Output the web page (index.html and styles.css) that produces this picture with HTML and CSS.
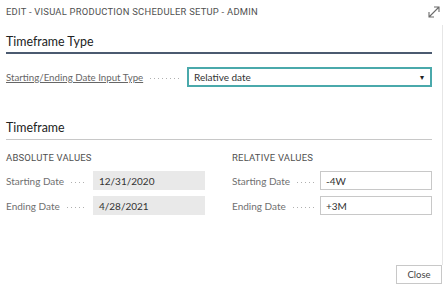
FILE: index.html
```html
<!DOCTYPE html>
<html lang="en">
<head>
    <meta charset="UTF-8">
    <meta name="viewport" content="width=device-width, initial-scale=1.0">
    <title>Visual Production Scheduler Setup</title>
    <link rel="stylesheet" href="styles.css">
</head>
<body>
    <div class="dialog">
        <div class="header">
            <span class="title">EDIT - VISUAL PRODUCTION SCHEDULER SETUP - ADMIN</span>
            <svg class="expand" width="14" height="14" viewBox="0 0 14 14">
                <path d="M2 12 L12 2 M7 2 H12 V7 M2 7 V12 H7" fill="none" stroke="#6b6b6b" stroke-width="1.1"/>
            </svg>
        </div>

        <div class="content">
            <div class="section">
                <h2 class="section-title strong">Timeframe Type</h2>
                <div class="field wide">
                    <a class="label link">Starting/Ending Date Input Type</a>
                    <span class="dots"></span>
                    <div class="select">
                        <span>Relative date</span>
                        <span class="arrow">&#9662;</span>
                    </div>
                </div>
            </div>

            <div class="section">
                <h2 class="section-title">Timeframe</h2>
                <div class="columns">
                    <div class="group">
                        <div class="group-title">ABSOLUTE VALUES</div>
                        <div class="field">
                            <span class="label">Starting Date</span>
                            <span class="dots"></span>
                            <div class="input readonly">12/31/2020</div>
                        </div>
                        <div class="field">
                            <span class="label">Ending Date</span>
                            <span class="dots"></span>
                            <div class="input readonly">4/28/2021</div>
                        </div>
                    </div>
                    <div class="group">
                        <div class="group-title">RELATIVE VALUES</div>
                        <div class="field">
                            <span class="label">Starting Date</span>
                            <span class="dots"></span>
                            <div class="input">-4W</div>
                        </div>
                        <div class="field">
                            <span class="label">Ending Date</span>
                            <span class="dots"></span>
                            <div class="input">+3M</div>
                        </div>
                    </div>
                </div>
            </div>
        </div>

        <div class="footer">
            <button class="btn">Close</button>
        </div>
    </div>
</body>
</html>
```

FILE: styles.css
```css
body {
    margin: 0;
    font-family: "Lato", "Open Sans", sans-serif;
    color: #333;
    background-color: #fff;
}
.dialog {
    width: 445px;
    height: 287px;
    display: flex;
    flex-direction: column;
}
.header {
    display: flex;
    justify-content: space-between;
    align-items: flex-start;
    padding: 5px 4px 0 6px;
    height: 20px;
}
.title {
    font-family: "Roboto", sans-serif;
    font-size: 9.4px;
    letter-spacing: 0.25px;
    color: #505050;
    padding-top: 1px;
}
.content {
    flex: 1;
    padding: 0 10px 0 6px;
    border-right: 1px solid #e6e6e6;
    margin-right: 2px;
}
.section-title {
    margin: 9px 0 0 0;
    font-size: 12.4px;
    font-weight: 400;
    color: #222;
    padding-bottom: 4px;
    border-bottom: 1px solid #c8c8c8;
}
.section-title.strong {
    padding-bottom: 3px;
    border-bottom: 2px solid #4b5a70;
}
.section + .section .section-title {
    margin-top: 34px;
}
.field {
    display: flex;
    align-items: center;
    height: 19px;
    margin-top: 6px;
    font-size: 10px;
}
.field.wide {
    margin-top: 13px;
}
.label {
    color: #707070;
    white-space: nowrap;
}
.link {
    font-size: 9.7px;
    text-decoration: underline;
    color: #666;
}
.dots {
    flex: 1;
    height: 1px;
    background-image: linear-gradient(to right, #b0b0b0 1px, transparent 1px);
    background-size: 4px 1px;
    background-repeat: repeat-x;
    margin: 3px 6px 0 7px;
}
.select {
    flex: 0 0 245px;
    height: 20px;
    box-sizing: border-box;
    border: 2px solid #4aa9ab;
    display: flex;
    align-items: center;
    justify-content: space-between;
    padding: 0 6px 0 5px;
    color: #333;
}
.arrow {
    font-size: 8px;
    color: #222;
}
.columns {
    display: grid;
    grid-template-columns: 199px 200px;
    column-gap: 27px;
}
.group-title {
    margin-top: 12px;
    font-family: "Roboto", sans-serif;
    font-size: 9.5px;
    color: #505050;
    letter-spacing: 0.2px;
    margin-bottom: 8px;
}
.input {
    width: 112px;
    height: 19px;
    box-sizing: border-box;
    border: 1px solid #c8c8c8;
    padding: 0 5px;
    display: flex;
    align-items: center;
    color: #333;
}
.input.readonly {
    background-color: #e9e9e9;
    border-color: #e9e9e9;
}
.footer {
    display: flex;
    justify-content: flex-end;
    padding: 0 3px 3px 0;
}
.btn {
    width: 46px;
    height: 19px;
    font-family: "Lato", sans-serif;
    font-size: 9.5px;
    color: #444;
    background-color: #fff;
    border: 1px solid #c8c8c8;
    cursor: pointer;
}
```
